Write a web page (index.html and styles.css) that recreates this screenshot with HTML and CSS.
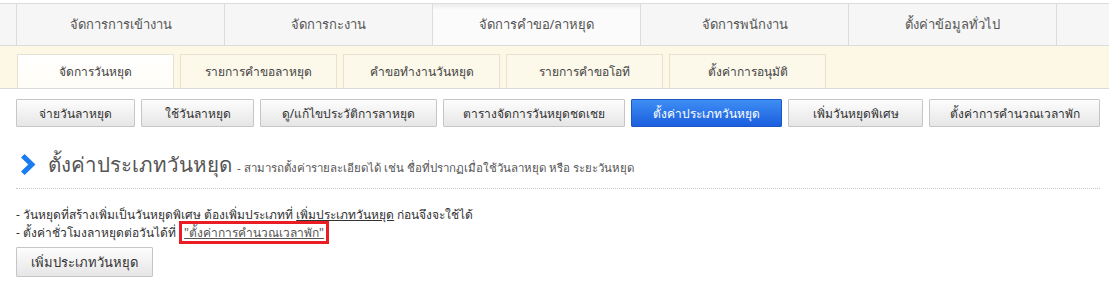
FILE: index.html
```html
<!DOCTYPE html>
<html lang="th">
<head>
    <meta charset="UTF-8">
    <title>ตั้งค่าประเภทวันหยุด</title>
    <link rel="stylesheet" href="styles.css">
</head>
<body>
    <div class="main-menu">
        <a class="main-tab" href="#">จัดการการเข้างาน</a>
        <a class="main-tab" href="#">จัดการกะงาน</a>
        <a class="main-tab active" href="#">จัดการคำขอ/ลาหยุด</a>
        <a class="main-tab" href="#">จัดการพนักงาน</a>
        <a class="main-tab" href="#">ตั้งค่าข้อมูลทั่วไป</a>
        <span class="main-tab empty"></span>
    </div>

    <div class="sub-menu">
        <a class="sub-tab active" href="#">จัดการวันหยุด</a>
        <a class="sub-tab" href="#">รายการคำขอลาหยุด</a>
        <a class="sub-tab" href="#">คำขอทำงานวันหยุด</a>
        <a class="sub-tab" href="#">รายการคำขอโอที</a>
        <a class="sub-tab" href="#">ตั้งค่าการอนุมัติ</a>
    </div>

    <div class="actions">
        <button class="btn">จ่ายวันลาหยุด</button>
        <button class="btn">ใช้วันลาหยุด</button>
        <button class="btn">ดู/แก้ไขประวัติการลาหยุด</button>
        <button class="btn">ตารางจัดการวันหยุดชดเชย</button>
        <button class="btn btn-blue">ตั้งค่าประเภทวันหยุด</button>
        <button class="btn">เพิ่มวันหยุดพิเศษ</button>
        <button class="btn">ตั้งค่าการคำนวณเวลาพัก</button>
    </div>

    <div class="page-title">
        <svg class="chevron" width="16" height="21" viewBox="0 0 16 21">
            <path d="M1 3.6 L4.6 0 L15.5 10.5 L4.6 21 L1 17.4 L8.2 10.5 Z" fill="#1b7bf0"/>
        </svg>
        <h2>ตั้งค่าประเภทวันหยุด</h2>
        <span class="title-note">- สามารถตั้งค่ารายละเอียดได้ เช่น ชื่อที่ปรากฏเมื่อใช้วันลาหยุด หรือ ระยะวันหยุด</span>
    </div>

    <div class="notes">
        <p>- วันหยุดที่สร้างเพิ่มเป็นวันหยุดพิเศษ ต้องเพิ่มประเภทที่ <a href="#">เพิ่มประเภทวันหยุด</a> ก่อนจึงจะใช้ได้</p>
        <p>- ตั้งค่าชั่วโมงลาหยุดต่อวันได้ที่ <a class="marked" href="#">"ตั้งค่าการคำนวณเวลาพัก"</a></p>
    </div>

    <button class="btn btn-add">เพิ่มประเภทวันหยุด</button>
</body>
</html>
```

FILE: styles.css
```css
body {
    margin: 0;
    padding-top: 3px;
    font-family: Tahoma, "Noto Sans", sans-serif;
    font-size: 12px;
    color: #333;
    background-color: #fff;
}

/* main menu */
.main-menu {
    display: flex;
    padding-left: 16px;
    background-color: #f6f6f6;
    border-top: 1px solid #dcdcdc;
    border-bottom: 1px solid #dcdcdc;
}

.main-tab {
    width: 207px;
    height: 41px;
    line-height: 41px;
    text-align: center;
    font-size: 13px;
    color: #555;
    text-decoration: none;
    border-left: 1px solid #dcdcdc;
}

.main-tab.active {
    background: linear-gradient(#ececec, #fbfbfb 6px, #fbfbfb);
}

.main-tab.empty {
    flex: 1;
}

/* sub menu */
.sub-menu {
    display: flex;
    gap: 6px;
    height: 34px;
    padding: 8px 0 0 17px;
    background-color: #fdf7e6;
    border-bottom: 1px solid #dadada;
}

.sub-tab {
    width: 155px;
    line-height: 33px;
    text-align: center;
    color: #444;
    text-decoration: none;
    background-color: #fcf8ea;
    border: 1px solid #e6e1d0;
    border-bottom: none;
}

.sub-tab.active {
    background: linear-gradient(#fff, #fffdf6);
}

/* buttons */
.actions {
    display: grid;
    grid-template-columns: 119px 113px 177px 182px 151px 135px 171px;
    gap: 6px;
    padding: 10px 0 0 16px;
}

.btn {
    height: 28px;
    padding: 0;
    font-family: inherit;
    font-size: 12px;
    white-space: nowrap;
    color: #333;
    background: linear-gradient(#fdfdfd, #e6e6e6);
    border: 1px solid #c6c6c6;
    border-radius: 1px;
    cursor: pointer;
}

.btn-blue {
    color: #fff;
    background: linear-gradient(#3e8ef4, #1b5ede);
    border-color: #1d57c4;
}

/* title */
.page-title {
    display: flex;
    align-items: baseline;
    margin: 0 9px 0 16px;
    padding: 21px 0 7px;
    border-bottom: 1px dotted #c8c8c8;
}

.chevron {
    align-self: center;
    margin: 0 12px 0 4px;
}

.page-title h2 {
    margin: 0;
    font-size: 20.5px;
    font-weight: normal;
    color: #555;
}

.title-note {
    margin-left: 5px;
    font-size: 11.5px;
    color: #555;
}

/* notes */
.notes {
    padding: 17px 0 0 16px;
}

.notes p {
    margin: 0;
    line-height: 18px;
}

.notes a {
    color: #333;
}

.notes a.marked {
    color: #555;
    border: 3px solid #ea1c24;
    padding: 0 2px;
}

.btn-add {
    margin: 5px 0 0 16px;
    height: 30px;
    padding: 0 14px;
    font-size: 13px;
}
```
